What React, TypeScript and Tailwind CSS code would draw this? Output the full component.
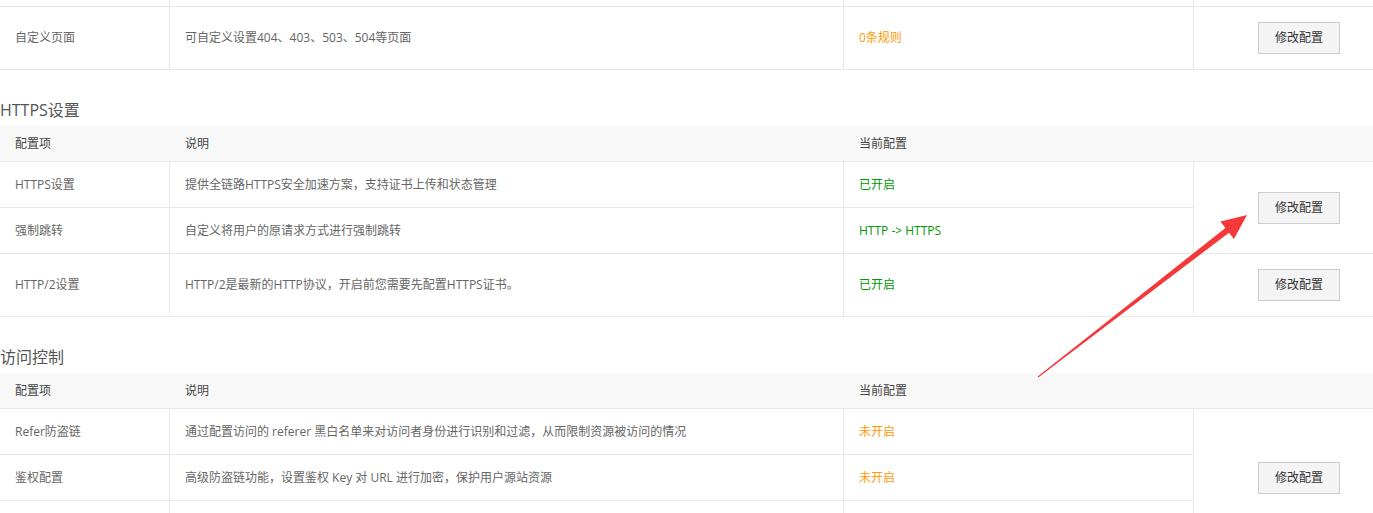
import React from "react";

type Tone = "orange" | "green";

type Item = {
  name: string;
  desc: string;
  value: string;
  tone: Tone;
};

const toneClass: Record<Tone, string> = {
  orange: "text-[#ff9900]",
  green: "text-[#009900]",
};

const spanClass: Record<number, string> = {
  1: "row-span-1",
  2: "row-span-2",
  3: "row-span-3",
};

const cols = "grid grid-cols-[170px_674px_350px_1fr]";

function EditButton() {
  return (
    <button
      type="button"
      className="w-[82px] h-[32px] border border-[#cccccc] bg-[#f4f4f4] text-[12px] text-[#333] hover:bg-[#eaeaea]"
    >
      修改配置
    </button>
  );
}

// one block of rows sharing a single "修改配置" button
function Group({ items }: { items: Item[] }) {
  const rowH = items.length === 1 ? "h-[63px]" : "h-[46px]";
  return (
    <div className={cols}>
      {items.map((item, i) => (
        <React.Fragment key={i}>
          <div
            className={`${rowH} col-start-1 flex items-center px-[15px] border-b border-r border-[#e8e8e8]`}
            style={{ gridRowStart: i + 1 }}
          >
            {item.name}
          </div>
          <div
            className={`${rowH} col-start-2 flex items-center px-[15px] border-b border-r border-[#e8e8e8]`}
            style={{ gridRowStart: i + 1 }}
          >
            {item.desc}
          </div>
          <div
            className={`${rowH} col-start-3 flex items-center px-[15px] border-b border-r border-[#e8e8e8] ${toneClass[item.tone]}`}
            style={{ gridRowStart: i + 1 }}
          >
            {item.value}
          </div>
        </React.Fragment>
      ))}
      <div
        className={`col-start-4 row-start-1 ${spanClass[items.length]} flex items-center pl-[64px] border-b border-[#e8e8e8]`}
      >
        <EditButton />
      </div>
    </div>
  );
}

function Header() {
  return (
    <div className={`${cols} h-[36px] bg-[#f8f8f8] border-b border-[#e8e8e8] text-[#444]`}>
      <div className="flex items-center px-[15px]">配置项</div>
      <div className="flex items-center px-[15px]">说明</div>
      <div className="flex items-center px-[15px]">当前配置</div>
      <div />
    </div>
  );
}

function Title({ children }: { children: React.ReactNode }) {
  return (
    <h3 className="mt-[28px] mb-[4px] text-[16px] leading-[24px] text-[#555]">{children}</h3>
  );
}

const httpsGroups: Item[][] = [
  [
    {
      name: "HTTPS设置",
      desc: "提供全链路HTTPS安全加速方案，支持证书上传和状态管理",
      value: "已开启",
      tone: "green",
    },
    {
      name: "强制跳转",
      desc: "自定义将用户的原请求方式进行强制跳转",
      value: "HTTP -> HTTPS",
      tone: "green",
    },
  ],
  [
    {
      name: "HTTP/2设置",
      desc: "HTTP/2是最新的HTTP协议，开启前您需要先配置HTTPS证书。",
      value: "已开启",
      tone: "green",
    },
  ],
];

// third row lies below the fold, only its borders show
const accessGroups: Item[][] = [
  [
    {
      name: "Refer防盗链",
      desc: "通过配置访问的 referer 黑白名单来对访问者身份进行识别和过滤，从而限制资源被访问的情况",
      value: "未开启",
      tone: "orange",
    },
    {
      name: "鉴权配置",
      desc: "高级防盗链功能，设置鉴权 Key 对 URL 进行加密，保护用户源站资源",
      value: "未开启",
      tone: "orange",
    },
    { name: "", desc: "", value: "", tone: "orange" },
  ],
];

export default function App() {
  return (
    <div className="relative min-h-screen bg-white text-[12px] text-[#666] font-['Open_Sans','Noto_Sans_CJK_SC',sans-serif]">
      {/* tail of the previous table, scrolled out of view */}
      <div className={cols}>
        <div className="h-[7px] border-b border-r border-[#e8e8e8]" />
        <div className="h-[7px] border-b border-r border-[#e8e8e8]" />
        <div className="h-[7px] border-b border-r border-[#e8e8e8]" />
        <div className="h-[7px] border-b border-[#e8e8e8]" />
      </div>
      <Group
        items={[
          {
            name: "自定义页面",
            desc: "可自定义设置404、403、503、504等页面",
            value: "0条规则",
            tone: "orange",
          },
        ]}
      />

      <Title>HTTPS设置</Title>
      <Header />
      {httpsGroups.map((g, i) => (
        <Group key={i} items={g} />
      ))}

      <Title>访问控制</Title>
      <Header />
      {accessGroups.map((g, i) => (
        <Group key={i} items={g} />
      ))}

      {/* red annotation arrow */}
      <svg
        className="absolute left-0 top-0 pointer-events-none"
        width="1373"
        height="513"
        viewBox="0 0 1373 513"
      >
        <polygon
          points="1037.7,376.6 1225.4,227.9 1220.5,221.6 1247,215 1233.9,239 1229,232.7 1038.3,377.4"
          fill="#f5383a"
        />
      </svg>
    </div>
  );
}
